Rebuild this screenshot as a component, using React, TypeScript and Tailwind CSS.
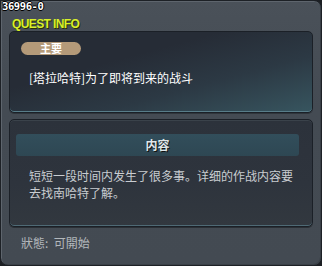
import React from "react";

export default function App() {
  return (
    <div className="w-[322px] h-[266px] overflow-hidden bg-[#1c1f23]">
      <div className="relative w-[322px] h-[266px] rounded-tr-[8px] rounded-b-[8px] border border-[#1d2126] bg-[linear-gradient(180deg,#4a5159_0%,#444b53_40%,#434a52_100%)] shadow-[inset_1px_1px_0_#5e656d,inset_-1px_-1px_0_#3a4047] flex flex-col px-[8px]">
        <div className="absolute left-[1px] top-[0px] text-[10.5px] leading-[11px] font-bold text-white font-['DejaVu_Sans_Mono',monospace] tracking-[-0.4px] [text-shadow:1px_0_0_#000,-1px_0_0_#000,0_1px_0_#000,0_-1px_0_#000]">
          36996-0
        </div>
        <div className="h-[30px] shrink-0 pl-[3px] pt-[9px]">
          <span className="text-[12px] leading-[12px] font-bold tracking-[-0.6px] text-[#d8f02a] font-['Liberation_Sans',Arial,sans-serif] [text-shadow:1px_1px_0_#2a3000]">
            QUEST INFO
          </span>
        </div>

        <div className="h-[82px] shrink-0 rounded-[5px] border border-[#1b2027] bg-[linear-gradient(165deg,#262c36_35%,#2c3944_65%,#37555f_100%)] shadow-[inset_0_-1px_0_#587d89,0_1px_0_#30363c] pl-[11px] pt-[10px] font-['Noto_Sans_CJK_SC','Noto_Sans',sans-serif]">
          <div className="w-[60px] h-[13px] rounded-full bg-[#b49a79] flex items-center justify-center text-[11px] leading-[13px] font-bold text-white">
            主要
          </div>
          <div className="mt-[15px] pl-[8px] text-[12px] leading-[16px] text-white">
            [塔拉哈特]为了即将到来的战斗
          </div>
        </div>

        <div className="mt-[6px] h-[108px] shrink-0 rounded-[5px] border border-[#1b2027] bg-[linear-gradient(180deg,#2c323b_0%,#2e343d_60%,#32383f_100%)] shadow-[inset_0_-1px_0_#4f6a75,inset_0_1px_0_#3a424a,0_1px_0_#2b3035] pl-[6px] pr-[13px] pt-[14px] font-['Noto_Sans_CJK_SC','Noto_Sans',sans-serif]">
          <div className="h-[22px] rounded-[3px] bg-[linear-gradient(180deg,#324e5b_0%,#2e4753_100%)] flex items-center justify-center text-[12px] font-bold text-[#dfe6ea] [text-shadow:1px_1px_0_#111]">
            内容
          </div>
          <div className="mt-[11px] pl-[13px] text-[12px] leading-[17px] text-[#c9cdd1]">
            <div>短短一段时间内发生了很多事。详细的作战内容要</div>
            <div>去找南哈特了解。</div>
          </div>
        </div>

        <div className="pl-[12px] pt-[8px] text-[12px] leading-[16px] text-[#b3b8bc] font-['Noto_Sans_CJK_TC','Noto_Sans',sans-serif]">
          狀態:&nbsp;&nbsp;可開始
        </div>
      </div>
    </div>
  );
}
